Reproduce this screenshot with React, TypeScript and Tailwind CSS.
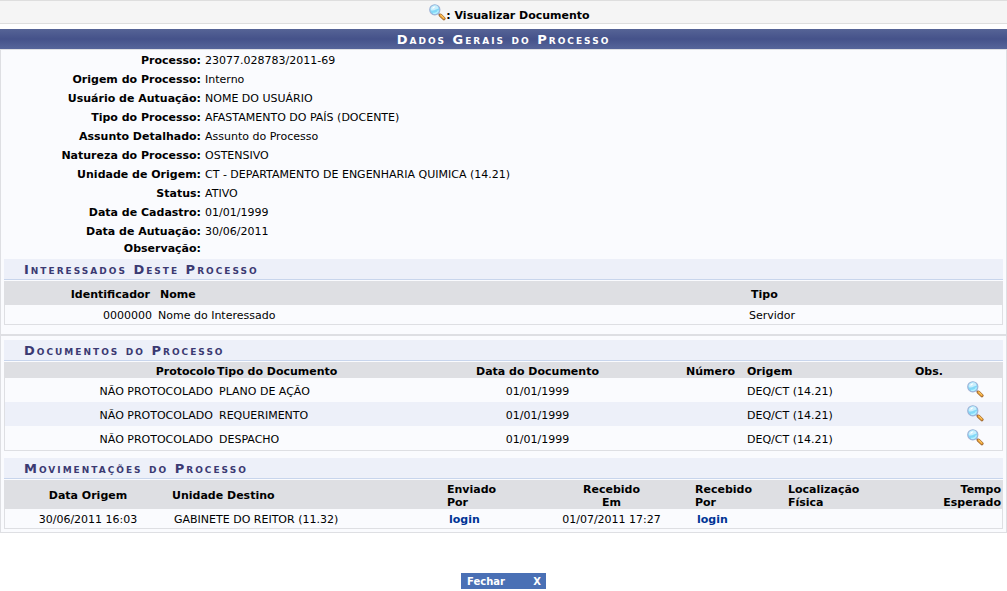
import type { ReactNode } from "react";

const details: [string, string][] = [
  ["Processo:", "23077.028783/2011-69"],
  ["Origem do Processo:", "Interno"],
  ["Usuário de Autuação:", "NOME DO USUÁRIO"],
  ["Tipo do Processo:", "AFASTAMENTO DO PAÍS (DOCENTE)"],
  ["Assunto Detalhado:", "Assunto do Processo"],
  ["Natureza do Processo:", "OSTENSIVO"],
  ["Unidade de Origem:", "CT - DEPARTAMENTO DE ENGENHARIA QUIMICA (14.21)"],
  ["Status:", "ATIVO"],
  ["Data de Cadastro:", "01/01/1999"],
  ["Data de Autuação:", "30/06/2011"],
];

const documents = ["PLANO DE AÇÃO", "REQUERIMENTO", "DESPACHO"];

function Magnifier() {
  return (
    <svg viewBox="0 0 17 17" className="block size-[17px] shrink-0" aria-hidden="true">
      <path d="M9.400 9.400l2 2" stroke="#a0a0aa" strokeWidth="1.600" />
      <path d="M11.400 11.200l3.500 3.400" stroke="#a06a35" strokeWidth="3.400" strokeLinecap="round" />
      <path d="M11.600 11.200l3.200 3.100" stroke="#f2a838" strokeWidth="1.900" strokeLinecap="round" />
      <path d="M12 11.200l2.400 2.300" stroke="#ffe08a" strokeWidth="0.700" strokeLinecap="round" />
      <circle cx="5.800" cy="5.800" r="5.100" fill="#82d8f8" stroke="#9fb2d6" strokeWidth="1.100" />
      <path d="M1.800 6.200a4 4 0 0 1 7.800-1.800C7.400 4.600 5.600 7.200 1.800 6.200z" fill="#c9effd" />
      <path d="M3 4.600a3.200 3.200 0 0 1 3-2.400C6 3.600 4.800 4.600 3 4.600z" fill="#ffffff" />
      <path d="M4.200 9.200a4 4 0 0 0 5.200-2.800" fill="none" stroke="#b5f0ff" strokeWidth="1.300" />
    </svg>
  );
}

function SectionTitle({ children }: { children: ReactNode }) {
  return (
    <h2 className="mb-px h-[21px] border-b border-[#c8d5ec] bg-[#edf0f9] pl-5 text-[13px] leading-[21px] font-bold tracking-[2px] text-[#3b3a72] [font-variant:small-caps]">
      {children}
    </h2>
  );
}

const tableClass =
  "w-full table-fixed border-separate border-spacing-0 border border-t-0 border-[#dedfe3] text-left";

export default function App() {
  return (
    <main className="bg-white font-['Verdana','DejaVu_Sans',sans-serif] text-[11px] leading-[13px] text-black">
      <div className="flex h-6 items-start justify-center border-y border-[#dedede] bg-[#f5f5f5] pt-[3px] pl-3 font-bold">
        <Magnifier />
        <span className="pt-[5px]">: Visualizar Documento</span>
      </div>

      <h1 className="mt-[5px] h-5 bg-linear-to-b from-[#566496] via-[#45528a] to-[#56659a] text-center text-[13px] leading-[22px] font-bold tracking-[2px] text-white [font-variant:small-caps]">
        Dados Gerais do Processo
      </h1>

      <div className="border border-[#dedfe3] bg-[#fafbfe]">
        <dl className="pt-px">
          {details.map(([label, value]) => (
            <div key={label} className="grid h-[19px] grid-cols-[200px_1fr] items-center gap-1">
              <dt className="text-right font-bold whitespace-nowrap">{label}</dt>
              <dd>{value}</dd>
            </div>
          ))}
          <div className="grid h-4 grid-cols-[200px_1fr] items-start gap-1 pt-px">
            <dt className="text-right font-bold">Observação:</dt>
            <dd />
          </div>
        </dl>

        <section className="px-[3px] pt-[2px]">
          <SectionTitle>Interessados Deste Processo</SectionTitle>
          <table className={tableClass}>
            <colgroup>
              <col className="w-[150px]" />
              <col />
              <col className="w-[256px]" />
            </colgroup>
            <thead className="bg-[#dedfe3]">
              <tr className="h-6">
                <th className="px-[5px] pt-0.5 text-right">Identificador</th>
                <th className="px-[5px] pt-0.5">Nome</th>
                <th className="px-[5px] pt-0.5">Tipo</th>
              </tr>
            </thead>
            <tbody>
              <tr className="h-[19px]">
                <td className="px-[3px] pt-0.5 text-right">0000000</td>
                <td className="px-[3px] pt-0.5">Nome do Interessado</td>
                <td className="px-[3px] pt-0.5">Servidor</td>
              </tr>
            </tbody>
          </table>
        </section>

        <section className="mt-[9px] border-t-2 border-[#dedfe3] px-[3px] pt-1">
          <SectionTitle>Documentos do Processo</SectionTitle>
          <table className={tableClass}>
            <colgroup>
              <col className="w-[211px]" />
              <col />
              <col className="w-[157px]" />
              <col className="w-[120px]" />
              <col className="w-[177px]" />
              <col className="w-[40px]" />
              <col className="w-[49px]" />
            </colgroup>
            <thead className="bg-[#dedfe3]">
              <tr className="h-4">
                <th className="px-px pt-0.5 text-right">Protocolo</th>
                <th className="px-px pt-0.5">Tipo do Documento</th>
                <th className="px-px pt-0.5 text-center">Data do Documento</th>
                <th className="px-px pt-0.5 text-right">Número</th>
                <th className="px-[11px] pt-0.5">Origem</th>
                <th className="px-0.5 pt-0.5">Obs.</th>
                <td />
              </tr>
            </thead>
            <tbody>
              {documents.map((name) => (
                <tr key={name} className="h-6 even:bg-[#edf0f9]">
                  <td className="px-[3px] pt-0.5 text-right">NÃO PROTOCOLADO</td>
                  <td className="px-[3px] pt-0.5">{name}</td>
                  <td className="px-[3px] pt-0.5 text-center">01/01/1999</td>
                  <td />
                  <td className="px-[11px] pt-0.5">DEQ/CT (14.21)</td>
                  <td />
                  <td className="pb-0.5 pl-[14px]">
                    <a href="#documento" aria-label={`Visualizar ${name}`} className="block w-[17px]">
                      <Magnifier />
                    </a>
                  </td>
                </tr>
              ))}
            </tbody>
          </table>
        </section>

        <section className="px-[3px] pt-[7px] pb-[3px]">
          <SectionTitle>Movimentações do Processo</SectionTitle>
          <table className={tableClass}>
            <colgroup>
              <col className="w-[166px]" />
              <col />
              <col className="w-[83px]" />
              <col className="w-[165px]" />
              <col className="w-[93px]" />
              <col className="w-[110px]" />
              <col className="w-[105px]" />
            </colgroup>
            <thead className="bg-[#dedfe3]">
              <tr className="h-[29px]">
                <th className="px-px pt-0.5 text-center">Data Origem</th>
                <th className="px-px pt-0.5">Unidade Destino</th>
                <th className="px-px pt-0.5">Enviado<br />Por</th>
                <th className="px-px pt-0.5 text-center">Recebido<br />Em</th>
                <th className="px-px pt-0.5">Recebido<br />Por</th>
                <th className="px-px pt-0.5">Localização<br />Física</th>
                <th className="px-px pt-0.5 text-right">Tempo<br />Esperado</th>
              </tr>
            </thead>
            <tbody>
              <tr className="h-[19px]">
                <td className="px-[3px] pt-0.5 text-center">30/06/2011 16:03</td>
                <td className="px-[3px] pt-0.5">GABINETE DO REITOR (11.32)</td>
                <td className="px-[3px] pt-0.5">
                  <a href="#login" className="font-bold text-[#003395]">login</a>
                </td>
                <td className="px-[3px] pt-0.5 text-center">01/07/2011 17:27</td>
                <td className="px-[3px] pt-0.5">
                  <a href="#login" className="font-bold text-[#003395]">login</a>
                </td>
                <td />
                <td />
              </tr>
            </tbody>
          </table>
        </section>
      </div>

      <div className="flex justify-center pt-10">
        <button
          type="button"
          className="flex h-4 w-[85px] items-center justify-between bg-[#4a70b5] pt-px pr-[5px] pl-1.5 text-[10px] leading-4 font-bold text-white"
        >
          <span>Fechar</span>
          <span>X</span>
        </button>
      </div>
    </main>
  );
}
